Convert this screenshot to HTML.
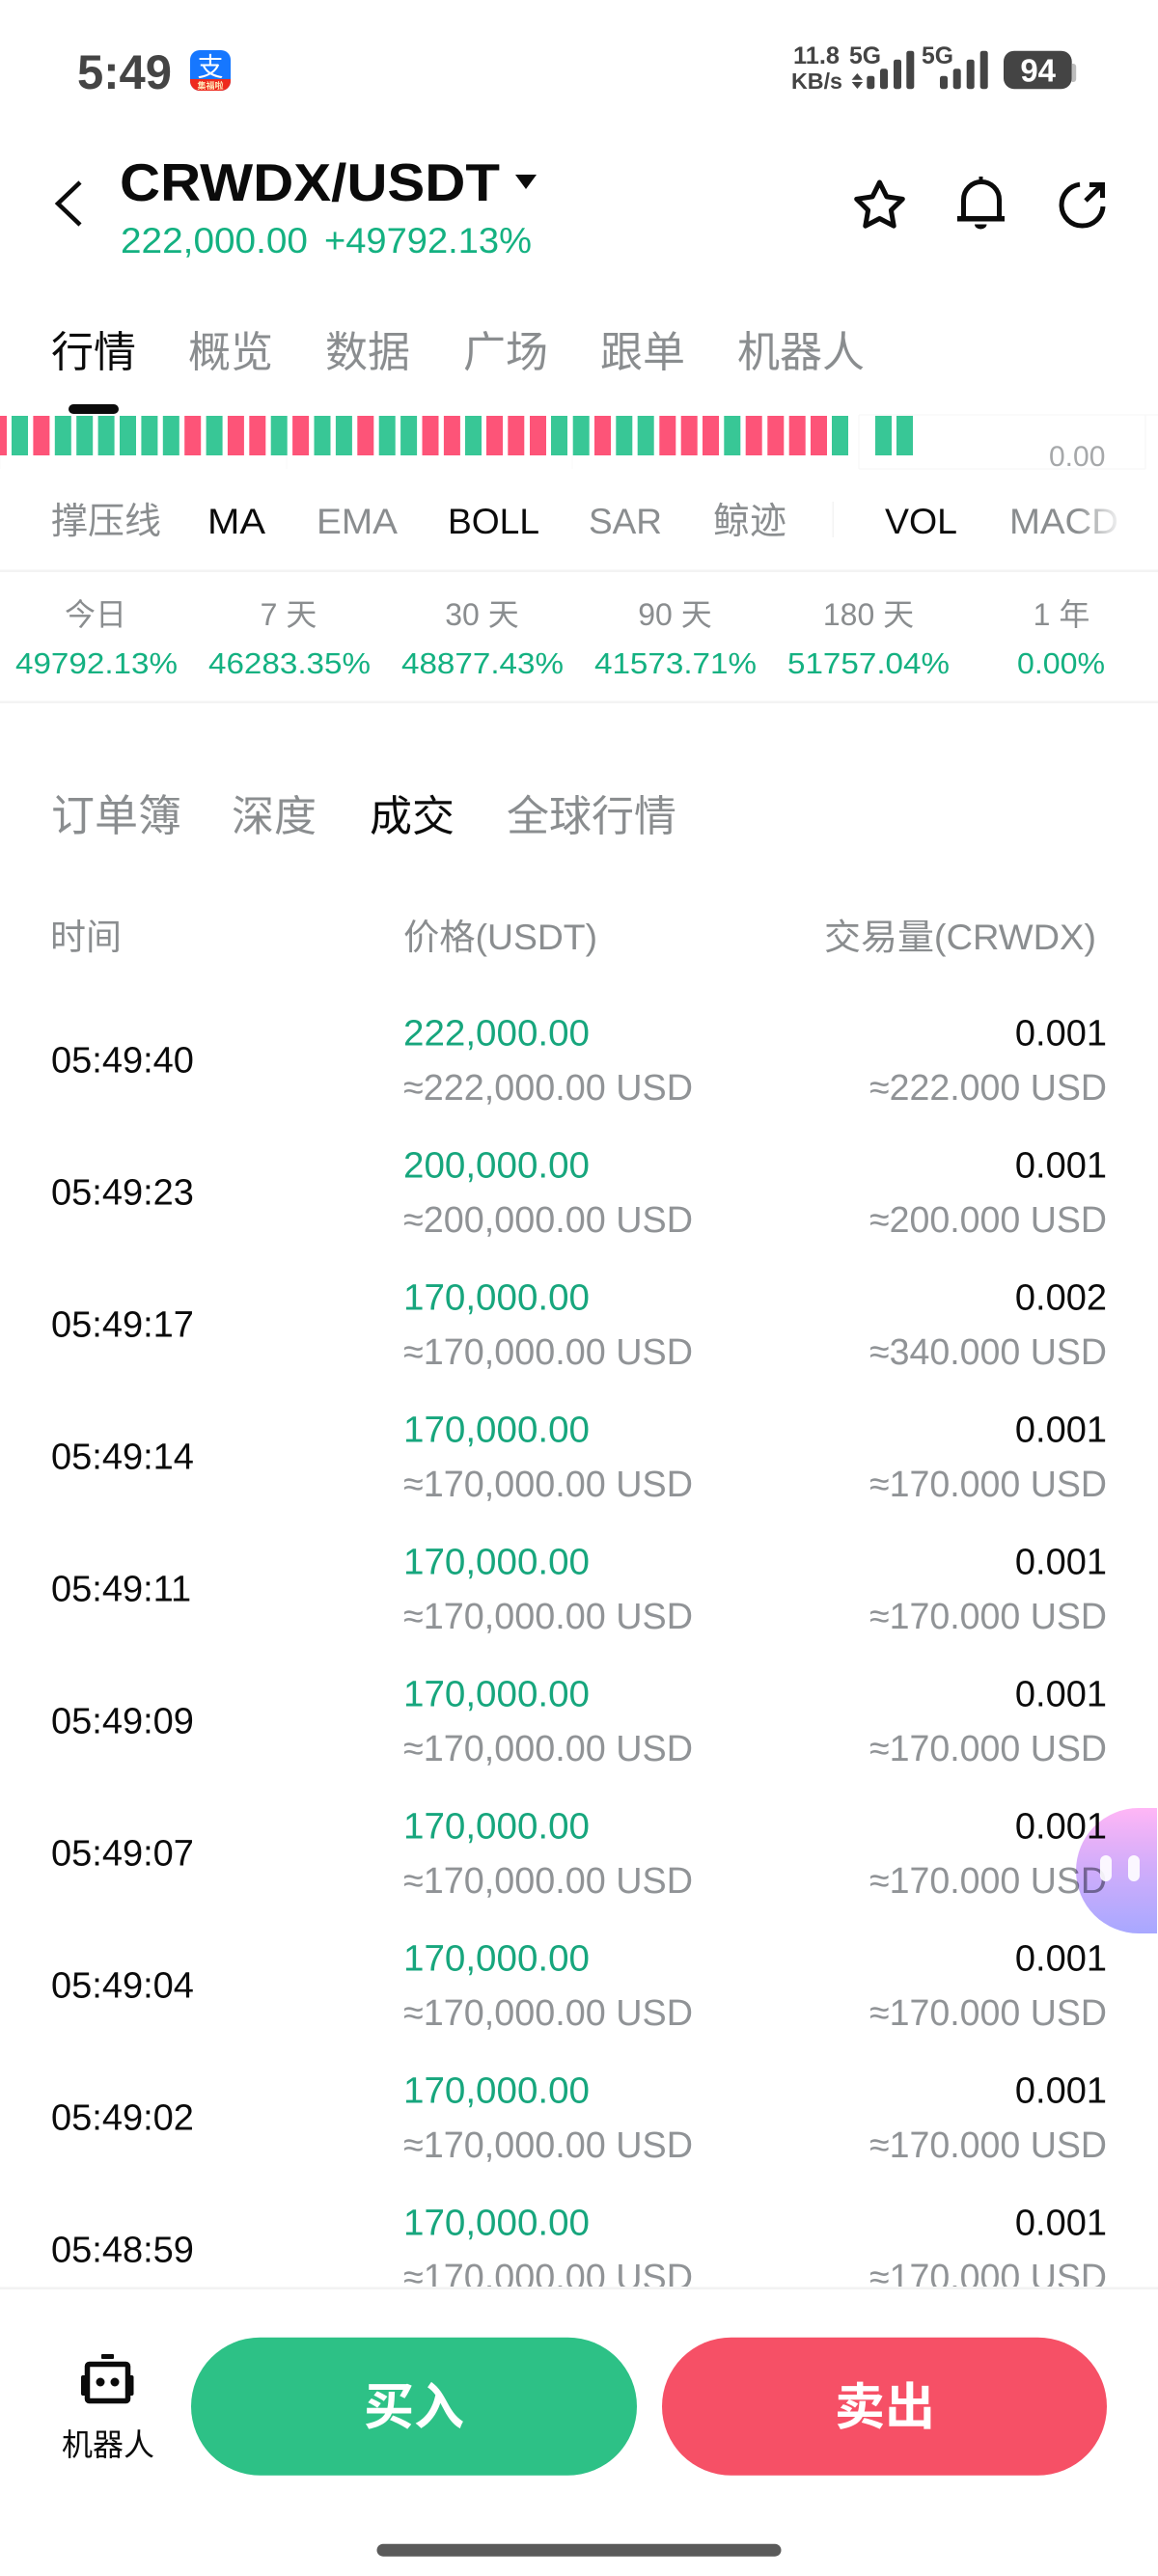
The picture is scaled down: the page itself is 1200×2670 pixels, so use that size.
<!DOCTYPE html>
<html lang="zh">
<head>
<meta charset="utf-8">
<title>CRWDX/USDT</title>
<style>
html,body{margin:0;padding:0;background:#fff;width:1200px;height:2670px;overflow:hidden}
svg{display:block}
text{font-family:"Liberation Sans","Noto Sans CJK SC",sans-serif;white-space:pre}
.g{fill:#8a8d8f}.k{fill:#0b0b0b}.up{fill:#14b181}.lp{fill:#17a67d}.ap{fill:#909396}
.s{font-size:38px}
.h{font-size:44px}.i{font-size:37px}.st{font-size:32px}.v{font-size:31px}
.sb{font-weight:700;fill:#444}
</style>
</head>
<body>
<svg xmlns="http://www.w3.org/2000/svg" width="1200" height="2670" viewBox="0 0 1200 2670">
<defs>
<linearGradient id="bub" x1="0" y1="0" x2="0" y2="1"><stop offset="0" stop-color="#ffb6f6"/><stop offset=".45" stop-color="#d3adfa"/><stop offset="1" stop-color="#a8a8ff"/></linearGradient>
<linearGradient id="fade" x1="0" y1="0" x2="1" y2="0"><stop offset="0" stop-color="#fff" stop-opacity="0"/><stop offset="1" stop-color="#fff"/></linearGradient>
<clipPath id="ali"><rect x="197" y="52" width="42" height="42" rx="10"/></clipPath>
<clipPath id="list"><rect x="0" y="1000" width="1200" height="1370"/></clipPath>
</defs>
<rect width="1200" height="2670" fill="#fff"/>

<!-- status bar -->
<text x="80" y="92" font-size="50" font-weight="700" fill="#444" textLength="98" lengthAdjust="spacingAndGlyphs">5:49</text>
<g clip-path="url(#ali)">
<rect x="197" y="52" width="42" height="42" fill="#1677ff"/>
<rect x="197" y="82" width="42" height="12" fill="#ee2a1d"/>
<text x="218" y="79" font-size="27" fill="#fff" text-anchor="middle">支</text>
<text x="218" y="92" font-size="9" font-weight="700" fill="#ffe7b8" text-anchor="middle">集福啦</text>
</g>
<text x="822" y="66" font-size="25" class="sb" textLength="48" lengthAdjust="spacingAndGlyphs">11.8</text>
<text x="820" y="92" font-size="23" class="sb" textLength="53" lengthAdjust="spacingAndGlyphs">KB/s</text>
<text x="880" y="66" font-size="25" class="sb" textLength="33" lengthAdjust="spacingAndGlyphs">5G</text>
<text x="955" y="66" font-size="25" class="sb" textLength="33" lengthAdjust="spacingAndGlyphs">5G</text>
<path d="M888.3 76l5.700 6.700h-11.400zM882.700 85h11.400l-5.700 7z" fill="#444"/>
<g fill="#444">
<rect x="898.300" y="78.700" width="8" height="13.500" rx="2.500"/>
<rect x="912" y="71.300" width="8" height="20.900" rx="2.500"/>
<rect x="926" y="61.700" width="8" height="30.500" rx="2.500"/>
<rect x="939.300" y="52.700" width="8" height="39.500" rx="2.500"/>
<rect x="974" y="78.700" width="8" height="13.500" rx="2.500"/>
<rect x="987.700" y="71.300" width="8" height="20.900" rx="2.500"/>
<rect x="1001.700" y="61.700" width="8" height="30.500" rx="2.500"/>
<rect x="1015.700" y="52.700" width="8" height="39.500" rx="2.500"/>
<rect x="1040" y="52.700" width="70.700" height="39.500" rx="11"/>
</g>
<path d="M1110.700 66h1.500a3 3 0 0 1 3 3v13a3 3 0 0 1-3 3h-1.500z" fill="#bdbdbd"/>
<text x="1075.700" y="84.300" font-size="33" font-weight="700" fill="#fff" text-anchor="middle">94</text>

<!-- header -->
<path d="M83 189L60 211L83 233" fill="none" stroke="#0b0b0b" stroke-width="4.500"/>
<text x="124" y="208" font-size="55" font-weight="700" class="k" textLength="394" lengthAdjust="spacingAndGlyphs">CRWDX/USDT</text>
<path d="M534 181h22l-11 15z" fill="#0b0b0b"/>
<text x="125" y="262" font-size="37" class="up" textLength="194" lengthAdjust="spacingAndGlyphs">222,000.00</text>
<text x="336" y="262" font-size="37" class="up" textLength="215" lengthAdjust="spacingAndGlyphs">+49792.13%</text>

<path d="M911.500 189L918.850 203.900L935.300 206.300L923.400 217.900L926.200 234.200L911.500 226.500L896.800 234.200L899.600 217.900L887.700 206.300L904.150 203.900Z" fill="none" stroke="#0b0b0b" stroke-width="5" stroke-linejoin="round"/>
<path d="M998.500 226V207a18.500 18.500 0 0 1 37 0V226" fill="none" stroke="#0b0b0b" stroke-width="5"/>
<rect x="992" y="224" width="49" height="5.500" fill="#0b0b0b"/>
<rect x="1014.500" y="183" width="4" height="6" fill="#0b0b0b"/>
<path d="M1010 232.500h12.500a6.250 5 0 0 1-12.500 0z" fill="#0b0b0b"/>
<path d="M1119 191.200A21.500 21.500 0 1 0 1143 214" fill="none" stroke="#0b0b0b" stroke-width="5" stroke-linecap="butt"/>
<path d="M1125 208L1141 192.500M1129 191.500H1142.500V205" fill="none" stroke="#0b0b0b" stroke-width="5"/>

<!-- main tabs -->
<text x="53" y="380" class="h k">行情</text>
<g class="h g">
<text x="195" y="380" class="g">概览</text>
<text x="337" y="380" class="g">数据</text>
<text x="480" y="380" class="g">广场</text>
<text x="622" y="380" class="g">跟单</text>
<text x="764" y="380" class="g">机器人</text>
</g>
<rect x="71" y="419" width="52" height="10" rx="5" fill="#0b0b0b"/>

<!-- chart strip -->
<path d="M890 430H1200M890 486H1187M890 430V486M1187 430V486" stroke="#f8f8f8" stroke-width="1.500" fill="none"/>
<path d="M297 472V486M593 472V486M0 472V486" stroke="#f9f9f9" stroke-width="1" fill="none"/>
<g fill="#fd5478">
<rect x="-10" y="431" width="17" height="41"/>
<rect x="34.400" y="431" width="17" height="41"/><rect x="191.200" y="431" width="17" height="41"/>
<rect x="235.900" y="431" width="17" height="41"/><rect x="258.300" y="431" width="17" height="41"/>
<rect x="303.100" y="431" width="17" height="41"/><rect x="370.300" y="431" width="17" height="41"/>
<rect x="437.500" y="431" width="17" height="41"/><rect x="459.900" y="431" width="17" height="41"/>
<rect x="504" y="431" width="17" height="41"/><rect x="526.300" y="431" width="17" height="41"/>
<rect x="549" y="431" width="17" height="41"/><rect x="616" y="431" width="17" height="41"/>
<rect x="683.300" y="431" width="17" height="41"/><rect x="705.700" y="431" width="17" height="41"/>
<rect x="728" y="431" width="17" height="41"/><rect x="772.700" y="431" width="17" height="41"/>
<rect x="795.300" y="431" width="17" height="41"/><rect x="817.700" y="431" width="17" height="41"/>
<rect x="840" y="431" width="17" height="41"/>
</g>
<g fill="#38c796">
<rect x="12" y="431" width="17" height="41"/><rect x="56.800" y="431" width="17" height="41"/>
<rect x="79.200" y="431" width="17" height="41"/><rect x="101.600" y="431" width="17" height="41"/>
<rect x="124" y="431" width="17" height="41"/><rect x="146.400" y="431" width="17" height="41"/>
<rect x="168.800" y="431" width="17" height="41"/><rect x="213.600" y="431" width="17" height="41"/>
<rect x="280.700" y="431" width="17" height="41"/><rect x="325.500" y="431" width="17" height="41"/>
<rect x="347.900" y="431" width="17" height="41"/><rect x="392.700" y="431" width="17" height="41"/>
<rect x="415.100" y="431" width="17" height="41"/><rect x="482" y="431" width="17" height="41"/>
<rect x="571" y="431" width="17" height="41"/><rect x="593.700" y="431" width="17" height="41"/>
<rect x="638.300" y="431" width="17" height="41"/><rect x="660.700" y="431" width="17" height="41"/>
<rect x="750.300" y="431" width="17" height="41"/><rect x="862" y="431" width="17" height="41"/>
<rect x="907" y="431" width="17" height="41"/><rect x="929" y="431" width="17" height="41"/>
</g>
<text x="1087" y="483" font-size="30" fill="#a6a8aa">0.00</text>

<!-- indicators -->
<text x="53" y="553" font-size="38" class="g">撑压线</text>
<text x="215" y="553" class="i k" textLength="60" lengthAdjust="spacingAndGlyphs">MA</text>
<text x="328" y="553" class="i g" textLength="84" lengthAdjust="spacingAndGlyphs">EMA</text>
<text x="464" y="553" class="i k" textLength="95" lengthAdjust="spacingAndGlyphs">BOLL</text>
<text x="610" y="553" class="i g" textLength="76" lengthAdjust="spacingAndGlyphs">SAR</text>
<text x="739" y="553" font-size="38" class="g">鲸迹</text>
<rect x="862.500" y="520" width="1.500" height="37" fill="#f3f3f3"/>
<text x="917" y="553" class="i k" textLength="75" lengthAdjust="spacingAndGlyphs">VOL</text>
<text x="1046" y="553" class="i g" textLength="113" lengthAdjust="spacingAndGlyphs">MACD</text>
<rect x="1115" y="515" width="50" height="45" fill="url(#fade)"/>
<rect x="0" y="590.500" width="1200" height="2.500" fill="#f3f3f3"/>

<!-- stats -->
<g class="st">
<text x="99" y="648" class="g" text-anchor="middle">今日</text>
<text x="299" y="648" class="g" text-anchor="middle">7 天</text>
<text x="499.500" y="648" class="g" text-anchor="middle">30 天</text>
<text x="699.500" y="648" class="g" text-anchor="middle">90 天</text>
<text x="900" y="648" class="g" text-anchor="middle">180 天</text>
<text x="1100" y="648" class="g" text-anchor="middle">1 年</text>
</g>
<g class="v">
<text x="16" y="698" class="up" textLength="168" lengthAdjust="spacingAndGlyphs">49792.13%</text>
<text x="216" y="698" class="up" textLength="168" lengthAdjust="spacingAndGlyphs">46283.35%</text>
<text x="416" y="698" class="up" textLength="168" lengthAdjust="spacingAndGlyphs">48877.43%</text>
<text x="616" y="698" class="up" textLength="168" lengthAdjust="spacingAndGlyphs">41573.71%</text>
<text x="816" y="698" class="up" textLength="168" lengthAdjust="spacingAndGlyphs">51757.04%</text>
<text x="1054" y="698" class="up" textLength="91" lengthAdjust="spacingAndGlyphs">0.00%</text>
</g>
<rect x="0" y="726.500" width="1200" height="2.500" fill="#f3f3f3"/>

<!-- sub tabs -->
<text x="53" y="861" font-size="45" class="g">订单簿</text>
<text x="240" y="861" class="h g">深度</text>
<text x="383" y="861" class="h k">成交</text>
<text x="525" y="861" class="h g">全球行情</text>

<!-- table header -->
<g font-size="37">
<text x="52" y="984" class="g">时间</text>
<text x="418" y="984" class="g" textLength="201" lengthAdjust="spacingAndGlyphs">价格(USDT)</text>
<text x="854" y="984" class="g" textLength="282" lengthAdjust="spacingAndGlyphs">交易量(CRWDX)</text>
</g>

<!-- rows -->
<g class="s" clip-path="url(#list)">
<g>
<text x="53" y="1111.500" class="k">05:49:40</text>
<text x="418" y="1083.500" class="lp" textLength="193" lengthAdjust="spacingAndGlyphs">222,000.00</text>
<text x="418" y="1140" class="ap" textLength="300" lengthAdjust="spacingAndGlyphs">≈222,000.00 USD</text>
<text x="1147" y="1083.500" class="k" text-anchor="end">0.001</text>
<text x="901" y="1140" class="ap" textLength="246" lengthAdjust="spacingAndGlyphs">≈222.000 USD</text>
</g>
<g transform="translate(0 137)">
<text x="53" y="1111.500" class="k">05:49:23</text>
<text x="418" y="1083.500" class="lp" textLength="193" lengthAdjust="spacingAndGlyphs">200,000.00</text>
<text x="418" y="1140" class="ap" textLength="300" lengthAdjust="spacingAndGlyphs">≈200,000.00 USD</text>
<text x="1147" y="1083.500" class="k" text-anchor="end">0.001</text>
<text x="901" y="1140" class="ap" textLength="246" lengthAdjust="spacingAndGlyphs">≈200.000 USD</text>
</g>
<g transform="translate(0 274)">
<text x="53" y="1111.500" class="k">05:49:17</text>
<text x="418" y="1083.500" class="lp" textLength="193" lengthAdjust="spacingAndGlyphs">170,000.00</text>
<text x="418" y="1140" class="ap" textLength="300" lengthAdjust="spacingAndGlyphs">≈170,000.00 USD</text>
<text x="1147" y="1083.500" class="k" text-anchor="end">0.002</text>
<text x="901" y="1140" class="ap" textLength="246" lengthAdjust="spacingAndGlyphs">≈340.000 USD</text>
</g>
<g transform="translate(0 411)">
<text x="53" y="1111.500" class="k">05:49:14</text>
<text x="418" y="1083.500" class="lp" textLength="193" lengthAdjust="spacingAndGlyphs">170,000.00</text>
<text x="418" y="1140" class="ap" textLength="300" lengthAdjust="spacingAndGlyphs">≈170,000.00 USD</text>
<text x="1147" y="1083.500" class="k" text-anchor="end">0.001</text>
<text x="901" y="1140" class="ap" textLength="246" lengthAdjust="spacingAndGlyphs">≈170.000 USD</text>
</g>
<g transform="translate(0 548)">
<text x="53" y="1111.500" class="k">05:49:11</text>
<text x="418" y="1083.500" class="lp" textLength="193" lengthAdjust="spacingAndGlyphs">170,000.00</text>
<text x="418" y="1140" class="ap" textLength="300" lengthAdjust="spacingAndGlyphs">≈170,000.00 USD</text>
<text x="1147" y="1083.500" class="k" text-anchor="end">0.001</text>
<text x="901" y="1140" class="ap" textLength="246" lengthAdjust="spacingAndGlyphs">≈170.000 USD</text>
</g>
<g transform="translate(0 685)">
<text x="53" y="1111.500" class="k">05:49:09</text>
<text x="418" y="1083.500" class="lp" textLength="193" lengthAdjust="spacingAndGlyphs">170,000.00</text>
<text x="418" y="1140" class="ap" textLength="300" lengthAdjust="spacingAndGlyphs">≈170,000.00 USD</text>
<text x="1147" y="1083.500" class="k" text-anchor="end">0.001</text>
<text x="901" y="1140" class="ap" textLength="246" lengthAdjust="spacingAndGlyphs">≈170.000 USD</text>
</g>
<g transform="translate(0 822)">
<text x="53" y="1111.500" class="k">05:49:07</text>
<text x="418" y="1083.500" class="lp" textLength="193" lengthAdjust="spacingAndGlyphs">170,000.00</text>
<text x="418" y="1140" class="ap" textLength="300" lengthAdjust="spacingAndGlyphs">≈170,000.00 USD</text>
<text x="1147" y="1083.500" class="k" text-anchor="end">0.001</text>
<text x="901" y="1140" class="ap" textLength="246" lengthAdjust="spacingAndGlyphs">≈170.000 USD</text>
</g>
<g transform="translate(0 959)">
<text x="53" y="1111.500" class="k">05:49:04</text>
<text x="418" y="1083.500" class="lp" textLength="193" lengthAdjust="spacingAndGlyphs">170,000.00</text>
<text x="418" y="1140" class="ap" textLength="300" lengthAdjust="spacingAndGlyphs">≈170,000.00 USD</text>
<text x="1147" y="1083.500" class="k" text-anchor="end">0.001</text>
<text x="901" y="1140" class="ap" textLength="246" lengthAdjust="spacingAndGlyphs">≈170.000 USD</text>
</g>
<g transform="translate(0 1096)">
<text x="53" y="1111.500" class="k">05:49:02</text>
<text x="418" y="1083.500" class="lp" textLength="193" lengthAdjust="spacingAndGlyphs">170,000.00</text>
<text x="418" y="1140" class="ap" textLength="300" lengthAdjust="spacingAndGlyphs">≈170,000.00 USD</text>
<text x="1147" y="1083.500" class="k" text-anchor="end">0.001</text>
<text x="901" y="1140" class="ap" textLength="246" lengthAdjust="spacingAndGlyphs">≈170.000 USD</text>
</g>
<g transform="translate(0 1233)">
<text x="53" y="1111.500" class="k">05:48:59</text>
<text x="418" y="1083.500" class="lp" textLength="193" lengthAdjust="spacingAndGlyphs">170,000.00</text>
<text x="418" y="1140" class="ap" textLength="300" lengthAdjust="spacingAndGlyphs">≈170,000.00 USD</text>
<text x="1147" y="1083.500" class="k" text-anchor="end">0.001</text>
<text x="901" y="1140" class="ap" textLength="246" lengthAdjust="spacingAndGlyphs">≈170.000 USD</text>
</g>
</g>

<!-- floating bubble -->
<path d="M1199 1874h-19a65 65 0 0 0 0 130h19z" fill="url(#bub)" style="mix-blend-mode:multiply"/>
<rect x="1140" y="1923" width="12" height="27" rx="6" fill="#fff" opacity=".9"/>
<rect x="1169" y="1923" width="12" height="27" rx="6" fill="#fff" opacity=".9"/>

<!-- bottom bar -->
<rect x="0" y="2370.500" width="1200" height="2.500" fill="#f2f2f2"/>
<rect x="105" y="2440" width="13" height="5" rx="1" fill="#0b0b0b"/>
<rect x="90.500" y="2450.500" width="42" height="38" rx="2" fill="none" stroke="#0b0b0b" stroke-width="5.500"/>
<path d="M88 2462h-2a2 2 0 0 0-2 2v17a2 2 0 0 0 2 2h2zM135 2462h1.500a2 2 0 0 1 2 2v17a2 2 0 0 1-2 2H135z" fill="#0b0b0b"/>
<circle cx="104" cy="2469" r="4.500" fill="#0b0b0b"/>
<circle cx="119" cy="2469" r="4.500" fill="#0b0b0b"/>
<text x="64" y="2545" font-size="32" class="k">机器人</text>

<rect x="198" y="2422.700" width="462" height="143" rx="71.500" fill="#2dc186"/>
<text x="429" y="2513" font-size="52" font-weight="700" fill="#fff" text-anchor="middle">买入</text>
<rect x="686" y="2422.700" width="461" height="143" rx="71.500" fill="#f65066"/>
<text x="917" y="2513" font-size="52" font-weight="700" fill="#fff" text-anchor="middle">卖出</text>

<rect x="390.500" y="2636.700" width="419" height="13" rx="6.500" fill="#5a5a5a"/>
</svg>
</body>
</html>
